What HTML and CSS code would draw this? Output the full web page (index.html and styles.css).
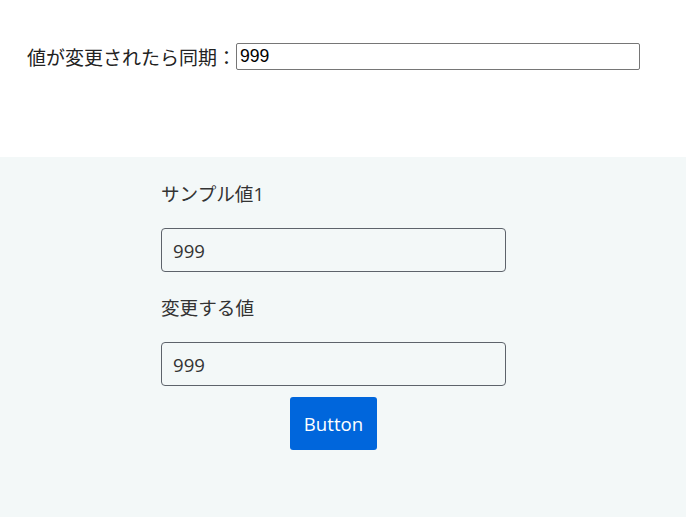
FILE: index.html
```html
<!DOCTYPE html>
<html lang="ja">
<head>
<meta charset="utf-8">
<title>Sync</title>
<link rel="stylesheet" href="styles.css">
</head>
<body>
<div class="top">
  <label class="sync-label">値が変更されたら同期：</label><input class="sync-input" type="text" value="999">
</div>
<div class="panel">
  <div class="form">
    <div class="field-label">サンプル値1</div>
    <input class="field-input" type="text" value="999">
    <div class="field-label">変更する値</div>
    <input class="field-input last" type="text" value="999">
    <div class="actions"><button class="btn" type="button">Button</button></div>
  </div>
</div>
</body>
</html>
```

FILE: styles.css
```css
html, body {
  margin: 0;
  padding: 0;
  background: #ffffff;
}
body {
  min-height: 517px;
  display: flex;
  flex-direction: column;
}
.top {
  height: 157px;
  box-sizing: border-box;
  padding: 43px 0 0 27px;
  display: flex;
  align-items: flex-start;
  color: #222;
}
.sync-label {
  line-height: 27px;
  font-family: "Noto Sans CJK JP", sans-serif;
  font-size: 19px;
  width: 208px;
  white-space: nowrap;
}
.sync-input {
  width: 404px;
  height: 27px;
  box-sizing: border-box;
  margin: 0 0 0 1px;
  padding: 0 3px;
  border: 1px solid #767676;
  border-radius: 2px;
  font-family: "Liberation Sans", sans-serif;
  font-size: 17.6px;
  color: #000;
  background: #fff;
}
.panel {
  flex: 1;
  background: #f3f8f8;
  padding: 23px 0 40px 161px;
}
.form {
  width: 345px;
  display: flex;
  flex-direction: column;
  font-family: "Open Sans", "Noto Sans CJK JP", sans-serif;
  font-size: 18.6px;
  color: #333;
}
.field-label {
  line-height: 27px;
  margin-bottom: 21px;
}
.field-input {
  height: 44px;
  box-sizing: border-box;
  margin: 0 0 22px 0;
  padding: 0 11px;
  border: 1px solid #5d636b;
  border-radius: 4px;
  background: #f3f8f8;
  font-family: "Open Sans", sans-serif;
  font-size: 18.6px;
  color: #333;
}
.field-input.last {
  margin-bottom: 11px;
}
.actions {
  display: flex;
  justify-content: center;
}
.btn {
  height: 53px;
  padding: 0 14px;
  border: none;
  border-radius: 3px;
  background: #0066dc;
  color: #fff;
  font-family: "Open Sans", sans-serif;
  font-size: 18.6px;
  line-height: 27px;
}
```
